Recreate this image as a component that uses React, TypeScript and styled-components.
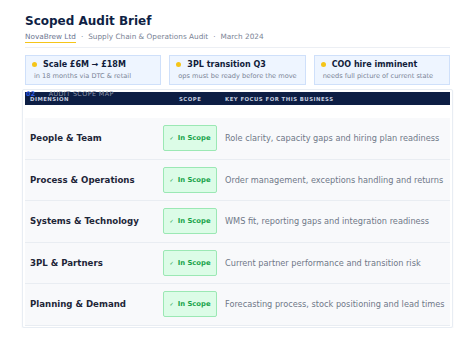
import React from 'react'
import styled, { createGlobalStyle } from 'styled-components'

const GlobalStyle = createGlobalStyle`
  html, body {
    margin: 0;
    padding: 0;
    background: #ffffff;
    font-family: 'DejaVu Sans', 'Liberation Sans', sans-serif;
  }
`

const Page = styled.div`
  width: 425px;
  padding: 13px 25px 0 25px;
`

const Title = styled.h1`
  margin: 0;
  font-size: 12px;
  line-height: 17px;
  font-weight: 700;
  color: #0f1f45;
`

const Meta = styled.div`
  margin-top: 1px;
  font-size: 7.3px;
  line-height: 11px;
  color: #7a8496;
  padding-bottom: 5px;
  border-bottom: 1px solid #eceff4;
`

const Client = styled.span`
  color: #6b7590;
  border-bottom: 1.5px solid #f5c518;
  padding-bottom: 1px;
`

const Dot = styled.span`
  margin: 0 5px;
`

const Cards = styled.div`
  display: grid;
  grid-template-columns: repeat(3, 1fr);
  gap: 8px;
  margin-top: 7px;
`

const Card = styled.div`
  background: #eef5ff;
  border: 1px solid #cfe0fa;
  padding: 2px 5px 3px 6px;
  overflow: hidden;
`

const CardTitle = styled.div`
  display: flex;
  align-items: center;
  gap: 6px;
  font-size: 8px;
  line-height: 13px;
  font-weight: 700;
  color: #111c3a;
  white-space: nowrap;
`

const Bullet = styled.span`
  width: 5px;
  height: 5px;
  border-radius: 50%;
  background: #f5c518;
  flex: none;
`

const CardText = styled.div`
  font-size: 6.6px;
  line-height: 10px;
  color: #7a8496;
  padding-left: 2px;
  white-space: nowrap;
`

const Panel = styled.section`
  position: relative;
  margin: 4px -3px 0 -3px;
  padding: 2px 2px 1px 2px;
  border: 1px solid #e8edf3;
  border-radius: 2px;
  background: #ffffff;
  box-shadow: 0 1px 2px rgba(15, 31, 69, 0.06);
`

const SectionLabel = styled.div`
  position: absolute;
  top: 0px;
  left: 3px;
  z-index: 2;
  font-size: 6.4px;
  line-height: 9px;
  letter-spacing: 0.4px;
  color: #8a93a6;
  white-space: nowrap;
`

const SectionNum = styled.span`
  color: #2b59e0;
  font-weight: 700;
  margin-right: 13px;
`

const Table = styled.div`
  display: flex;
  flex-direction: column;
`

const HeadRow = styled.div`
  display: grid;
  grid-template-columns: 133px 62px 1fr;
  align-items: center;
  height: 13px;
  background: #0d1e44;
  padding-left: 5px;
`

const HeadCell = styled.div<{ $pad?: number }>`
  font-size: 5.4px;
  font-weight: 700;
  letter-spacing: 0.45px;
  color: #c3cbdf;
  text-transform: uppercase;
  padding-left: ${p => p.$pad ?? 0}px;
`

const Spacer = styled.div`
  height: 13px;
`

const Row = styled.div`
  display: grid;
  grid-template-columns: 133px 62px 1fr;
  align-items: center;
  height: 40.5px;
  background: #f8f9fb;
  border-bottom: 1px solid #e9edf2;
  padding-left: 5px;
`

const Dimension = styled.div`
  font-size: 8.6px;
  font-weight: 700;
  color: #1e2638;
`

const Badge = styled.div`
  width: 54px;
  height: 26px;
  box-sizing: border-box;
  display: flex;
  align-items: center;
  justify-content: center;
  gap: 4px;
  background: #dcfce7;
  border: 1px solid #9be8b4;
  border-radius: 2px;
  color: #17a34a;
  font-size: 6.8px;
  font-weight: 700;
`

const Tick = styled.span`
  font-size: 5px;
  font-weight: 400;
`

const Focus = styled.div`
  font-size: 8.2px;
  color: #6f7888;
  white-space: nowrap;
`

const facts = [
  { title: 'Scale £6M → £18M', text: 'in 18 months via DTC & retail' },
  { title: '3PL transition Q3', text: 'ops must be ready before the move' },
  { title: 'COO hire imminent', text: 'needs full picture of current state' },
]

const rows = [
  { name: 'People & Team', focus: 'Role clarity, capacity gaps and hiring plan readiness' },
  { name: 'Process & Operations', focus: 'Order management, exceptions handling and returns' },
  { name: 'Systems & Technology', focus: 'WMS fit, reporting gaps and integration readiness' },
  { name: '3PL & Partners', focus: 'Current partner performance and transition risk' },
  { name: 'Planning & Demand', focus: 'Forecasting process, stock positioning and lead times' },
]

const App = () => {
  return (
    <Page>
      <GlobalStyle />
      <Title>Scoped Audit Brief</Title>
      <Meta>
        <Client>NovaBrew Ltd</Client>
        <Dot>·</Dot>Supply Chain &amp; Operations Audit<Dot>·</Dot>March 2024
      </Meta>
      <Cards>
        {facts.map(f => (
          <Card key={f.title}>
            <CardTitle><Bullet />{f.title}</CardTitle>
            <CardText>{f.text}</CardText>
          </Card>
        ))}
      </Cards>
      <Panel>
        <SectionLabel><SectionNum>02</SectionNum>AUDIT SCOPE MAP</SectionLabel>
        <Table>
          <HeadRow>
            <HeadCell>Dimension</HeadCell>
            <HeadCell $pad={16}>Scope</HeadCell>
            <HeadCell>Key focus for this business</HeadCell>
          </HeadRow>
          <Spacer />
          {rows.map(r => (
            <Row key={r.name}>
              <Dimension>{r.name}</Dimension>
              <Badge><Tick>✓</Tick>In Scope</Badge>
              <Focus>{r.focus}</Focus>
            </Row>
          ))}
        </Table>
      </Panel>
    </Page>
  )
}

export default App
